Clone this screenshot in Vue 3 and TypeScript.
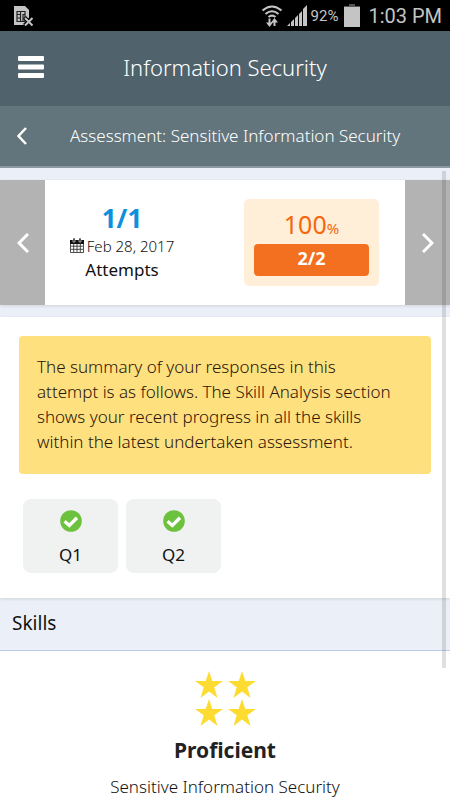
<script setup lang="ts">
interface Question {
  id: number
  label: string
}

const questions: Question[] = [
  { id: 1, label: 'Q1' },
  { id: 2, label: 'Q2' },
]

const skill = { level: 'Proficient', name: 'Sensitive Information Security', stars: 4 }
</script>

<template>
  <div class="screen">
    <div class="status">
      <svg class="sim" width="20" height="22" viewBox="0 0 20 22" aria-hidden="true">
        <path d="M0 1h11l4 4v8l-3 2v5H0z" fill="#c4c4c4" />
        <path d="M3 6.500h8v10H3zM3 9.500h3M3 13h3M6.500 6.500v10M9 9v7M9 9.500h2M9 13h2" fill="none" stroke="#222" stroke-width="1.200" />
        <path d="M10.500 12.500l8 8M18.500 12.500l-8 8" stroke="#000" stroke-width="4" />
        <path d="M11 13l7.500 7.500M18.500 13L11 20.500" stroke="#c4c4c4" stroke-width="2" />
      </svg>
      <div class="status-right">
        <svg width="22" height="24" viewBox="0 0 22 24" fill="none" stroke="#c4c4c4" aria-hidden="true">
          <path d="M1.500 6.500Q11-1.500 20.500 6.500M4.500 10Q11 4.500 17.500 10M7.500 13Q11 10.200 14.500 13" stroke-width="2.100" />
          <path d="M8.500 14.500v5M13.500 22v-5" stroke-width="2" />
          <path d="M5 18.500h7l-3.500 4.500zM10 18.500h7l-3.500-4.500z" fill="#c4c4c4" stroke="none" />
        </svg>
        <svg class="signal" width="20" height="21" viewBox="0 0 20 21" fill="#c4c4c4" aria-hidden="true">
          <path d="M0 21l3-3v3zM4 17l3-3v7H4zM8 13l3-3v11H8zM12 9l3-3v15h-3zM16 4l4-4v21h-4z" />
        </svg>
        <span class="percent">92%</span>
        <svg class="battery" width="16" height="23" viewBox="0 0 16 23" aria-hidden="true">
          <path d="M5 0h6v2h5v3H0V2h5z" fill="#555" />
          <path d="M0 3h16v20H0z" fill="#c4c4c4" />
        </svg>
        <span class="clock">1:03 PM</span>
      </div>
    </div>

    <header class="header">
      <button class="icon-button menu" type="button" aria-label="Menu">
        <svg width="26" height="22" viewBox="0 0 26 22" fill="#fff" aria-hidden="true">
          <rect width="26" height="5" rx="1" />
          <rect y="8.500" width="26" height="5" rx="1" />
          <rect y="17" width="26" height="5" rx="1" />
        </svg>
      </button>
      <h1>Information Security</h1>
    </header>

    <nav class="subheader">
      <button class="icon-button back" type="button" aria-label="Back">
        <svg width="10" height="18" viewBox="0 0 10 18" fill="none" stroke="#fff" stroke-width="2.500" aria-hidden="true">
          <path d="M9 1L1.500 9L9 17" />
        </svg>
      </button>
      <h2>Assessment: Sensitive Information Security</h2>
    </nav>

    <main>
      <section class="attempt">
        <button class="icon-button arrow" type="button" aria-label="Previous attempt">
          <svg width="12" height="20" viewBox="0 0 12 20" fill="none" stroke="#fff" stroke-width="3" aria-hidden="true">
            <path d="M11 1L2 10L11 19" />
          </svg>
        </button>
        <div class="attempt-info">
          <strong>1/1</strong>
          <span class="date">
            <svg width="14" height="15" viewBox="0 0 14 15" aria-hidden="true">
              <path d="M0 2h14v4H0z" fill="#111" />
              <path d="M.5 5v9.500h13V5M3.700 5v9M7 5v9M10.300 5v9M1 8.200h12M1 11.300h12" fill="none" stroke="#222" stroke-width=".8" />
              <path d="M3 0h2v4H3zM9 0h2v4H9z" fill="#111" stroke="#fff" stroke-width=".6" />
            </svg>
            Feb 28, 2017
          </span>
          <span class="caption">Attempts</span>
        </div>
        <div class="score-cell">
          <div class="score">
            <div class="score-percent">100<small>%</small></div>
            <div class="score-count">2/2</div>
          </div>
        </div>
        <button class="icon-button arrow" type="button" aria-label="Next attempt">
          <svg width="12" height="20" viewBox="0 0 12 20" fill="none" stroke="#fff" stroke-width="3" aria-hidden="true">
            <path d="M1 1L10 10L1 19" />
          </svg>
        </button>
      </section>

      <section class="responses">
        <p class="summary">
          The summary of your responses in this<br />
          attempt is as follows. The Skill Analysis section<br />
          shows your recent progress in all the skills<br />
          within the latest undertaken assessment.
        </p>
        <div class="questions">
          <button v-for="q in questions" :key="q.id" class="question" type="button">
            <svg width="22" height="22" viewBox="0 0 22 22" aria-hidden="true">
              <circle cx="11" cy="11" r="10.800" fill="#6cc13d" />
              <path d="M4.600 11.200L9.300 15.400L17 7.800" fill="none" stroke="#fff" stroke-width="3.400" />
            </svg>
            {{ q.label }}
          </button>
        </div>
      </section>

      <h3 class="skills-title">Skills</h3>
      <section class="skill">
        <div class="stars">
          <svg v-for="n in skill.stars" :key="n" width="28" height="27" viewBox="0 0 28 27" aria-hidden="true">
            <path d="M14 0l3.300 10H28l-8.700 6.200L22.500 27 14 20.500 5.500 27l3.200-10.800L0 10h10.700z" fill="#fedb31" />
          </svg>
        </div>
        <h4>{{ skill.level }}</h4>
        <p>{{ skill.name }}</p>
      </section>
    </main>
    <div class="scroll-thumb"></div>
  </div>
</template>

<style>
body {
  background: #fff;
}
</style>

<style scoped>
.screen {
  position: relative;
  color: #111;
  font-family: "Noto Sans", "Open Sans", sans-serif;
  font-weight: 350;
}
h1,
h2,
h3,
h4,
p {
  margin: 0;
}
svg {
  display: block;
  flex: none;
}
button {
  font: inherit;
  color: inherit;
  border: 0;
  padding: 0;
  cursor: pointer;
}
.icon-button {
  display: flex;
  align-items: center;
  background: none;
}
.status {
  display: flex;
  align-items: center;
  justify-content: space-between;
  height: 31px;
  padding: 0 8px 0 14px;
  background: #000;
  color: #c4c4c4;
  font-family: Roboto, sans-serif;
  font-weight: 400;
}
.status-right {
  display: flex;
  align-items: center;
}
.signal {
  margin: 0 4px;
}
.percent {
  font-size: 15px;
}
.battery {
  margin: 0 8px 0 6px;
}
.clock {
  font-size: 20px;
}
.header {
  box-sizing: border-box;
  display: grid;
  grid-template-columns: 48px 1fr 48px;
  align-items: center;
  height: 75px;
  padding-bottom: 3px;
  background: #50626c;
  color: #fff;
}
.menu {
  height: 40px;
  padding-left: 18px;
}
.header h1 {
  font-size: 22px;
  line-height: 30px;
  font-weight: 350;
  text-align: center;
}
.subheader {
  display: flex;
  align-items: center;
  height: 60px;
  border-bottom: 2px solid #8b9aa2;
  background: #63757c;
  color: #fff;
}
.back {
  width: 70px;
  height: 40px;
  padding-left: 17px;
}
.subheader h2 {
  font-size: 17px;
  line-height: 24px;
  font-weight: 350;
  white-space: nowrap;
}
main {
  background: #ebf0f8;
}
.attempt {
  display: flex;
  height: 125px;
  margin-top: 12px;
  background: #fff;
  box-shadow: 0 1px 3px rgba(0, 0, 0, 0.12);
}
main::before {
  content: "";
  display: table;
}
.arrow {
  justify-content: center;
  width: 45px;
  background: #b3b3b3;
}
.attempt-info,
.score-cell {
  flex: 1;
  display: flex;
  flex-direction: column;
  align-items: center;
  justify-content: center;
}
.attempt-info {
  padding: 0 26px 2px 0;
}
.attempt-info strong {
  color: #0d90dc;
  font-size: 26px;
  line-height: 32px;
  font-weight: 700;
}
.date {
  display: flex;
  align-items: center;
  gap: 3px;
  font-size: 15px;
  line-height: 24px;
}
.caption {
  font-size: 17px;
  line-height: 24px;
  font-weight: 400;
}
.score-cell {
  align-items: flex-end;
  padding-right: 26px;
}
.score {
  box-sizing: border-box;
  width: 135px;
  padding: 8px 10px 10px;
  border-radius: 5px;
  background: #ffefd8;
  text-align: center;
}
.score-percent {
  padding-bottom: 2px;
  color: #f5680f;
  font-size: 25px;
  line-height: 35px;
  font-weight: 400;
}
.score-percent small {
  font-size: 15px;
  line-height: 15px;
}
.score-count {
  padding-bottom: 4px;
  border-radius: 4px;
  background: #f37021;
  color: #fff;
  font-size: 18px;
  line-height: 28px;
  font-weight: 700;
}
.responses {
  margin-top: 12px;
  padding: 19px;
  padding-bottom: 25px;
  background: #fff;
  box-shadow: 0 1px 3px rgba(0, 0, 0, 0.12);
}
.summary {
  padding: 18px 18px 20px;
  border-radius: 4px;
  background: #fee07f;
  color: #2c1508;
  font-size: 17px;
  line-height: 25px;
}
.questions {
  display: flex;
  gap: 8px;
  margin-top: 25px;
  padding-left: 4px;
}
.question {
  display: flex;
  flex-direction: column;
  align-items: center;
  gap: 11px;
  width: 95px;
  height: 74px;
  padding-top: 11px;
  border-radius: 8px;
  background: #f0f2f2;
  font-size: 17px;
  line-height: 24px;
  font-weight: 400;
}
.skills-title {
  padding: 12px 12px 14px;
  border-bottom: 1px solid #bccdea;
  font-size: 19px;
  line-height: 26px;
  font-weight: 400;
}
.skill {
  display: flex;
  flex-direction: column;
  align-items: center;
  background: #fff;
  padding-top: 20px;
}
.stars {
  display: grid;
  grid-template-columns: auto auto;
  gap: 1px 5px;
}
.skill h4 {
  margin-top: 8px;
  color: #222;
  font-size: 21px;
  line-height: 32px;
  font-weight: 700;
}
.skill p {
  margin-top: 9px;
  font-size: 17px;
  line-height: 24px;
}
.scroll-thumb {
  position: absolute;
  top: 171px;
  right: 4px;
  width: 4px;
  height: 497px;
  background: rgba(0, 0, 0, 0.12);
}
</style>
